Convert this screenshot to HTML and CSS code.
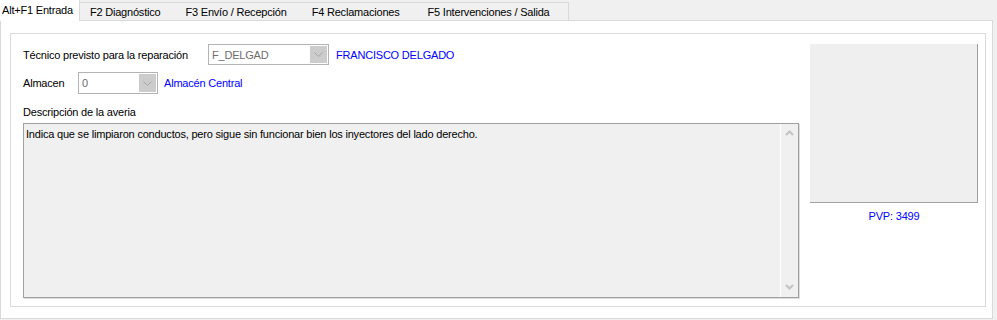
FILE: index.html
```html
<!DOCTYPE html>
<html lang="es">
<head>
    <meta charset="UTF-8">
    <title>Entrada de reparación</title>
    <link rel="stylesheet" href="styles.css">
</head>
<body>
    <div class="tabs">
        <div class="tab active">Alt+F1 Entrada</div>
        <div class="tab first">F2 Diagnóstico</div>
        <div class="tab">F3 Envío / Recepción</div>
        <div class="tab wide">F4 Reclamaciones</div>
        <div class="tab last">F5 Intervenciones / Salida</div>
    </div>

    <div class="page">
        <div class="panel">
            <div class="form">
                <div class="row">
                    <span class="label tecnico">Técnico previsto para la reparación</span>
                    <div class="combo combo-tecnico">
                        <span class="combo-value">F_DELGAD</span>
                        <span class="combo-btn">
                            <svg width="9" height="5" viewBox="0 0 9 5"><path d="M0.5 0.5 L4.5 4.5 L8.5 0.5" fill="none" stroke="#a6a6a6" stroke-width="1"/></svg>
                        </span>
                    </div>
                    <span class="link">FRANCISCO DELGADO</span>
                </div>

                <div class="row row-almacen">
                    <span class="label almacen">Almacen</span>
                    <div class="combo combo-almacen">
                        <span class="combo-value">0</span>
                        <span class="combo-btn">
                            <svg width="9" height="5" viewBox="0 0 9 5"><path d="M0.5 0.5 L4.5 4.5 L8.5 0.5" fill="none" stroke="#a6a6a6" stroke-width="1"/></svg>
                        </span>
                    </div>
                    <span class="link">Almacén Central</span>
                </div>

                <div class="label desc-label">Descripción de la averia</div>

                <div class="memo">
                    <div class="memo-text">Indica que se limpiaron conductos, pero sigue sin funcionar bien los inyectores del lado derecho.</div>
                    <div class="scrollbar">
                        <svg width="9" height="6" viewBox="0 0 9 6"><path d="M1 5 L4.5 1.5 L8 5" fill="none" stroke="#c2c2c2" stroke-width="2"/></svg>
                        <svg width="9" height="6" viewBox="0 0 9 6"><path d="M1 1 L4.5 4.5 L8 1" fill="none" stroke="#c2c2c2" stroke-width="2"/></svg>
                    </div>
                </div>
            </div>

            <div class="side">
                <div class="photo"></div>
                <div class="pvp">PVP: 3499</div>
            </div>
        </div>
    </div>
</body>
</html>
```

FILE: styles.css
```css
body {
    margin: 0;
    background: #f0f0f0;
    font-family: "Liberation Sans", Arial, sans-serif;
    font-size: 11px;
    letter-spacing: -0.2px;
    color: #000;
}

/* tab strip */
.tabs {
    display: flex;
    align-items: flex-end;
    height: 20px;
}

.tab {
    height: 18px;
    box-sizing: border-box;
    padding: 3px 13px 0 12px;
    background: #f0f0f0;
    border-top: 1px solid #d9d9d9;
    white-space: nowrap;
}

.tab.first {
    padding-left: 10px;
}

.tab.wide {
    padding-right: 16px;
}

.tab.last {
    border-right: 1px solid #d9d9d9;
    padding-right: 18px;
}

.tab.active {
    height: 21px;
    margin-bottom: -1px;
    padding: 4px 6px 0 2px;
    background: #fff;
    border-top: none;
    border-right: 1px solid #d9d9d9;
    position: relative;
    z-index: 1;
}

/* tab page */
.page {
    width: 993px;
    height: 299px;
    box-sizing: border-box;
    background: #fff;
    border: 1px solid #d9d9d9;
    padding: 12px 6px 0 9px;
}

.panel {
    height: 274px;
    box-sizing: border-box;
    border: 1px solid #dadada;
    padding: 10px 7px 8px 12px;
    display: flex;
    gap: 11px;
}

.form {
    flex: 1;
    display: flex;
    flex-direction: column;
}

.row {
    display: flex;
    align-items: center;
    height: 21px;
}

.row-almacen {
    margin-top: 7px;
    height: 22px;
}

.label.tecnico {
    width: 185px;
}

.label.almacen {
    width: 55px;
}

.combo {
    height: 100%;
    box-sizing: border-box;
    border: 1px solid #b4b4b4;
    background: #fff;
    display: flex;
    align-items: center;
    justify-content: space-between;
    padding: 1px;
}

.combo-tecnico {
    width: 121px;
}

.combo-almacen {
    width: 80px;
}

.combo-value {
    color: #6d6d6d;
    padding-left: 2px;
}

.combo-btn {
    width: 17px;
    height: 100%;
    background: #cccccc;
    display: flex;
    align-items: center;
    justify-content: center;
}

.link {
    color: #0000ff;
    margin-left: 7px;
}

.row-almacen .link {
    margin-left: 6px;
}

.desc-label {
    margin-top: 11px;
    line-height: 14px;
}

.memo {
    flex: 1;
    margin-top: 4px;
    display: flex;
    background: #f0f0f0;
    border: 1px solid #a0a0a0;
    box-shadow: 1px 1px 0 #dcdcdc;
}

.memo-text {
    flex: 1;
    padding: 3px 2px;
    line-height: 14px;
}

.scrollbar {
    width: 17px;
    border-left: 1px solid #fff;
    display: flex;
    flex-direction: column;
    justify-content: space-between;
    align-items: center;
    padding: 6px 0 7px;
}

/* picture column */
.side {
    width: 168px;
    display: flex;
    flex-direction: column;
}

.photo {
    height: 159px;
    box-sizing: border-box;
    background: #efefef;
    border-right: 1px solid #a0a0a0;
    border-bottom: 1px solid #a0a0a0;
}

.pvp {
    margin-top: 6px;
    line-height: 14px;
    text-align: center;
    color: #0000ff;
}
```
